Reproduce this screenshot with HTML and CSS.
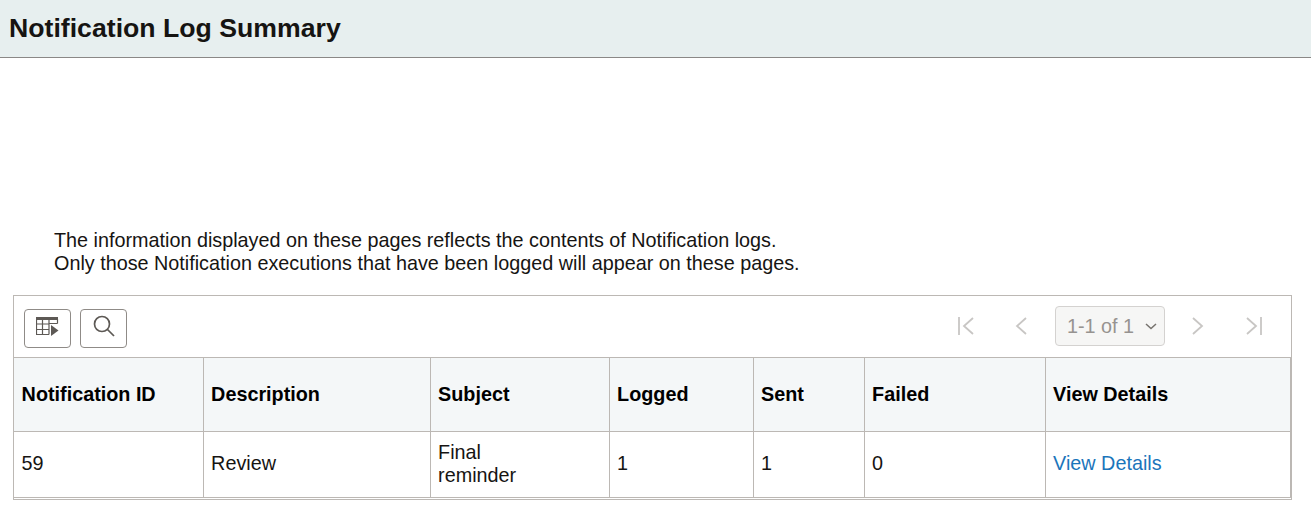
FILE: index.html
```html
<!DOCTYPE html>
<html lang="en">
<head>
<meta charset="utf-8">
<title>Notification Log Summary</title>
<link rel="stylesheet" href="styles.css">
</head>
<body>
<header class="page-header"><h1 class="page-title">Notification Log Summary</h1></header>
<main class="content">
  <p class="intro">The information displayed on these pages reflects the contents of Notification logs.<br>Only those Notification executions that have been logged will appear on these pages.</p>
  <section class="grid-box">
    <div class="toolbar">
      <div class="tools">
        <button class="tool" type="button" aria-label="Personalize">
          <svg width="23" height="19" viewBox="0 0 23 19"><path class="ico-fill" d="M0 0h22v3h-22z"/><path class="ico-line thin" d="M.5 2v15.500h12.500M.5 7h12.500M.5 12.500h12.500M6.500 2v15.500M13 2v15.500M13 6.500h8.500M21.500 2v4.500"/><path class="ico-fill" d="M15 8l7.500 5.500-7.500 5.500z"/></svg>
        </button>
        <button class="tool" type="button" aria-label="Find">
          <svg width="22" height="22" viewBox="0 0 22 22"><circle class="ico-line" cx="9" cy="9" r="7.500"/><path class="ico-line" d="M14.500 14.500l6.500 6.500"/></svg>
        </button>
      </div>
      <nav class="pager">
        <svg class="pg pg-first" width="18" height="20" viewBox="0 0 18 20"><path d="M3 1v18M17 2l-9 8 9 8"/></svg>
        <svg class="pg pg-prev" width="12" height="20" viewBox="0 0 12 20"><path d="M11 2l-9 8 9 8"/></svg>
        <div class="range"><span>1-1 of 1</span><svg width="12" height="7" viewBox="0 0 12 7"><path d="M1 1l5 4.500 5-4.500"/></svg></div>
        <svg class="pg pg-next" width="12" height="20" viewBox="0 0 12 20"><path d="M1 2l9 8-9 8"/></svg>
        <svg class="pg pg-last" width="18" height="20" viewBox="0 0 18 20"><path d="M2 2l9 8-9 8M16 1v18"/></svg>
      </nav>
    </div>
    <table class="log">
      <colgroup>
        <col class="c1"><col class="c2"><col class="c3"><col class="c4"><col class="c5"><col class="c6"><col class="c7">
      </colgroup>
      <thead>
        <tr><th>Notification ID</th><th>Description</th><th>Subject</th><th>Logged</th><th>Sent</th><th>Failed</th><th>View Details</th></tr>
      </thead>
      <tbody>
        <tr><td>59</td><td>Review</td><td>Final<br>reminder</td><td>1</td><td>1</td><td>0</td><td><a href="#">View Details</a></td></tr>
      </tbody>
    </table>
  </section>
</main>
</body>
</html>
```
FILE: styles.css
```css
* { box-sizing: border-box; }
html, body { margin: 0; padding: 0; background: #fff; }
body { font-family: "Liberation Sans", Arial, sans-serif; font-size: 19.8px; color: #161412; overflow: hidden; }
.page-header { height: 58px; background: #e7efef; border-bottom: 1px solid #8a8886; padding-left: 9px; display: flex; align-items: center; }
.page-title { margin: 0; font-size: 26.67px; font-weight: 700; line-height: 30px; margin-bottom: 2px; }
.content { padding: 0 19px 0 13px; }
.intro { margin: 0; padding: 171px 0 0 41px; line-height: 23px; height: 237px; }
.grid-box { width: 1279px; height: 205px; border: 1px solid #bcb8b4; }
.toolbar { height: 61px; display: flex; justify-content: space-between; align-items: center; padding: 0 0 0 10px; }
.tools { display: flex; gap: 9px; margin-top: 3px; }
.tool { width: 47px; height: 39px; padding: 0 0 4px; background: #fff; border: 1px solid #8f8b87; border-radius: 4px; display: flex; align-items: center; justify-content: center; }
.ico-fill { fill: #5d5955; }
.ico-line { fill: none; stroke: #5d5955; stroke-width: 1.7; }
.ico-line.thin { stroke-width: 1.2; }
.pager { display: flex; align-items: center; width: 340px; height: 100%; padding-bottom: 1px; }
.pg { fill: none; stroke: #c8c6c4; stroke-width: 1.8; flex: none; }
.pg-first { margin-left: 5px; }
.pg-prev { margin-left: 41px; }
.pg-next { margin-left: 27px; }
.pg-last { margin-left: 41px; }
.range { margin-left: 28px; width: 110px; height: 40px; background: #f6f6f5; border: 1px solid #d4d2d0; border-radius: 4px; color: #969390; font-size: 19.8px; display: flex; align-items: center; padding-left: 11px; gap: 11px; flex: none; }
.range svg { fill: none; stroke: #77736f; stroke-width: 1.5; }
.log { border-collapse: collapse; table-layout: fixed; width: 1277px; }
.c1 { width: 189px; } .c2 { width: 227px; } .c3 { width: 179px; } .c4 { width: 144px; } .c5 { width: 111px; } .c6 { width: 181px; } .c7 { width: 246px; }
.log th, .log td { border: 1px solid #bcb8b4; border-left: 0; text-align: left; padding: 0 7px 0 7.6px; font-size: 19.8px; line-height: 23px; }
.log th { height: 74px; background: #f4f7f8; font-weight: 700; color: #000; }
.log td { height: 66px; padding-bottom: 2px; }
.log th:last-child, .log td:last-child { border-right-width: 2px; }
.log a { color: #1b75bb; text-decoration: none; }
```
